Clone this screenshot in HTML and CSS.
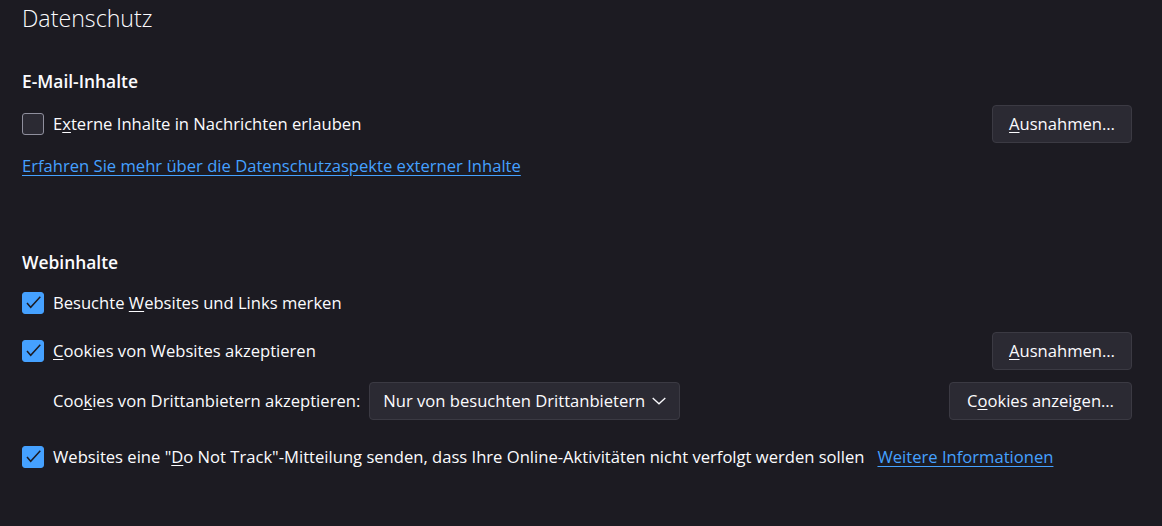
FILE: index.html
```html
<!DOCTYPE html>
<html lang="de">
<head>
<meta charset="utf-8">
<link rel="stylesheet" href="styles.css">
</head>
<body>
<main class="page">
  <h1 class="title">Datenschutz</h1>

  <section class="section">
    <h2 class="section-title">E-Mail-Inhalte</h2>
    <div class="row">
      <label class="check">
        <span class="box"></span>
        <span class="label">E<u>x</u>terne Inhalte in Nachrichten erlauben</span>
      </label>
      <button class="btn"><u>A</u>usnahmen…</button>
    </div>
    <a class="link learn" href="#">Erfahren Sie mehr über die Datenschutzaspekte externer Inhalte</a>
  </section>

  <section class="section web">
    <h2 class="section-title">Webinhalte</h2>
    <div class="row row-plain">
      <label class="check">
        <span class="box checked"><svg viewBox="0 0 22 22"><path d="M5 11 L8.7 15.3 L18.3 4.8" /></svg></span>
        <span class="label">Besuchte <u>W</u>ebsites und Links merken</span>
      </label>
    </div>
    <div class="row">
      <label class="check">
        <span class="box checked"><svg viewBox="0 0 22 22"><path d="M5 11 L8.7 15.3 L18.3 4.8" /></svg></span>
        <span class="label"><u>C</u>ookies von Websites akzeptieren</span>
      </label>
      <button class="btn"><u>A</u>usnahmen…</button>
    </div>
    <div class="row sub">
      <div class="sub-left">
        <span class="label">Coo<u>k</u>ies von Drittanbietern akzeptieren:</span>
        <button class="select">Nur von besuchten Drittanbietern<svg class="chev" viewBox="0 0 14 8"><path d="M0.7 1 L7 6.8 L13.3 1" /></svg></button>
      </div>
      <button class="btn btn-wide">C<u>o</u>okies anzeigen…</button>
    </div>
    <div class="row row-plain dnt">
      <label class="check">
        <span class="box checked"><svg viewBox="0 0 22 22"><path d="M5 11 L8.7 15.3 L18.3 4.8" /></svg></span>
        <span class="label">Websites eine "<u>D</u>o Not Track"-Mitteilung senden, dass Ihre Online-Aktivitäten nicht verfolgt werden sollen</span>
      </label>
      <a class="link info" href="#">Weitere Informationen</a>
    </div>
  </section>
</main>
</body>
</html>
```
FILE: styles.css
```css
html, body {
  margin: 0;
  padding: 0;
  background: #1c1b22;
}
body {
  color: #fbfbfe;
  font-family: "Open Sans", "Noto Sans", sans-serif;
  font-size: 16.6px;
  line-height: 22px;
  width: 1162px;
  height: 526px;
  overflow: hidden;
}
.page {
  padding: 0 30px 0 22px;
}
.title {
  margin: 0;
  padding-top: 2px;
  font-size: 23.2px;
  font-weight: 300;
  line-height: 32px;
  color: #fbfbfe;
}
.section-title {
  margin: 0;
  font-size: 17.4px;
  font-weight: 600;
  line-height: 22px;
}
.section:first-of-type .section-title {
  margin-top: 36px;
}
.web .section-title {
  margin-top: 74px;
}
.row {
  display: flex;
  align-items: center;
  justify-content: space-between;
  height: 38px;
}
.section:first-of-type .row {
  margin-top: 13px;
}
.web .row {
  margin-top: 10px;
}
.web .row-plain:first-of-type {
  margin-top: 11px;
}
.web .row.sub {
  margin-top: 12px;
  padding-left: 31px;
}
.web .row.dnt {
  margin-top: 18px;
  justify-content: flex-start;
}
.check {
  display: flex;
  align-items: center;
  gap: 9px;
}
.box {
  width: 20px;
  height: 20px;
  border: 1px solid #8f8f9d;
  border-radius: 3px;
  background: #2b2a33;
  display: flex;
  align-items: center;
  justify-content: center;
}
.box.checked {
  background: #45a1ff;
  border-color: #45a1ff;
}
.box svg {
  width: 22px;
  height: 22px;
  flex: none;
  fill: none;
  stroke: #1c1b22;
  stroke-width: 1.5;
}
.label u, .btn u {
  text-decoration-thickness: 1px;
  text-underline-offset: 2px;
}
.btn {
  font: inherit;
  color: #fbfbfe;
  background: #2b2a33;
  border: 1px solid #3b3a43;
  border-radius: 4px;
  height: 38px;
  padding: 0 12px;
  width: 140px;
}
.btn-wide {
  width: 183px;
}
.link {
  color: #45a1ff;
  text-decoration: underline;
  text-decoration-thickness: 1px;
  text-underline-offset: 3px;
}
.learn {
  display: inline-block;
  margin-top: 12px;
}
.sub-left {
  display: flex;
  align-items: center;
  gap: 9px;
}
.select {
  font: inherit;
  color: #fbfbfe;
  background: #2b2a33;
  border: 1px solid #3b3a43;
  border-radius: 4px;
  height: 38px;
  padding: 0 13px 0 13px;
  display: flex;
  align-items: center;
  gap: 7px;
}
.chev {
  width: 14px;
  height: 8px;
  fill: none;
  stroke: #fbfbfe;
  stroke-width: 1.3;
}
.info {
  margin-left: 13px;
}
```
